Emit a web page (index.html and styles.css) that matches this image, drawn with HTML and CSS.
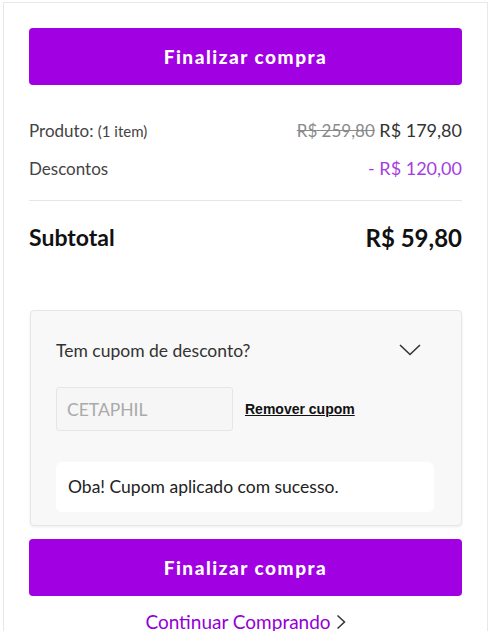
FILE: index.html
```html
<!DOCTYPE html>
<html lang="pt-BR">
<head>
	<meta charset="utf-8" />
	<title>Resumo do pedido</title>
	<link rel="stylesheet" href="styles.css">
</head>
<body>
<div class="summary">
	<button class="btn-checkout">Finalizar compra</button>

	<div class="row row-product">
		<span class="label">Produto: <small>(1 item)</small></span>
		<span class="value"><s class="old">R$ 259,80</s> R$ 179,80</span>
	</div>
	<div class="row row-discount">
		<span class="label">Descontos</span>
		<span class="value discount">- R$ 120,00</span>
	</div>

	<hr class="divider">

	<div class="row row-total">
		<span>Subtotal</span>
		<span>R$ 59,80</span>
	</div>

	<div class="coupon">
		<div class="coupon-head">
			<span>Tem cupom de desconto?</span>
			<svg class="chevron" width="22" height="12" viewBox="0 0 22 12">
				<path d="M1 1 L11 10.5 L21 1" fill="none" stroke="#333" stroke-width="1.6"/>
			</svg>
		</div>
		<div class="coupon-form">
			<input class="coupon-input" type="text" value="CETAPHIL" disabled>
			<a href="#" class="coupon-remove">Remover cupom</a>
		</div>
		<div class="coupon-msg">Oba! Cupom aplicado com sucesso.</div>
	</div>

	<button class="btn-checkout btn-bottom">Finalizar compra</button>

	<a href="#" class="continue">Continuar Comprando
		<svg class="arrow" width="10" height="16" viewBox="0 0 10 16">
			<path d="M1.5 1.5 L8.5 8 L1.5 14.5" fill="none" stroke="#333" stroke-width="1.5"/>
		</svg>
	</a>
</div>
</body>
</html>
```

FILE: styles.css
```css
*{
	box-sizing:border-box;
}

body{
	margin:0;
	font-family:"Lato", "Noto Sans", sans-serif;
	color:#333;
	background:#fff;
}

.summary{
	margin:2px 0 0 3px;
	width:485px;
	border:1px solid #e8e8e8;
	border-bottom:none;
	padding:25px 25px 0 25px;
	height:640px;
}

.btn-checkout{
	display:block;
	width:100%;
	height:57px;
	border:none;
	border-radius:4px;
	background-color:#a100e2;
	color:#fff;
	font-family:"Lato", sans-serif;
	font-weight:900;
	font-size:19px;
	letter-spacing:.08em;
	cursor:pointer;
}

.row{
	display:flex;
	justify-content:space-between;
	align-items:center;
}

.row-product{
	margin-top:33px;
	height:24px;
	font-size:17px;
	color:#444;
}

.row-product small{
	font-size:15px;
}

.row-discount{
	margin-top:14px;
	height:24px;
	font-size:17px;
	color:#444;
}

.value{
	font-size:18px;
	color:#333;
}

.old{
	color:#8a8a8a;
	font-size:17px;
}

.discount{
	color:#a43ee0;
}

.divider{
	border:none;
	border-top:1px solid #e6e6e6;
	margin:20px 0 0 0;
}

.row-total{
	margin-top:22px;
	height:28px;
	font-size:23px;
	font-weight:700;
	color:#111;
}

.row-total span:last-child{
	font-size:24px;
}

.coupon{
	margin:59px 0 0 1px;
	background:#f8f8f8;
	border:1px solid #e6e6e6;
	border-radius:4px;
	box-shadow:0 1px 3px rgba(0,0,0,.08);
	padding:25px 27px 13px 25px;
}

.coupon-head{
	display:flex;
	justify-content:space-between;
	align-items:center;
	height:28px;
	font-size:17.5px;
	color:#333;
	padding-right:13px;
}

.coupon-form{
	display:flex;
	align-items:center;
	gap:12px;
	margin-top:23px;
}

.coupon-input{
	width:177px;
	height:44px;
	border:1px solid #e6e6e6;
	border-radius:3px;
	background:#f6f6f6;
	padding:0 10px;
	font-family:"Lato", sans-serif;
	font-size:17.5px;
	color:#aaa;
}

.coupon-remove{
	font-family:"Liberation Sans", Arial, sans-serif;
	font-weight:700;
	font-size:14px;
	color:#111;
}

.coupon-msg{
	margin-top:31px;
	background:#fff;
	border-radius:6px;
	height:50px;
	line-height:50px;
	padding:0 12px;
	font-size:17.5px;
	color:#222;
}

.btn-bottom{
	margin-top:13px;
}

.continue{
	display:flex;
	justify-content:center;
	align-items:center;
	gap:5px;
	margin-top:14px;
	font-size:19px;
	color:#9300d6;
	text-decoration:none;
}
```
